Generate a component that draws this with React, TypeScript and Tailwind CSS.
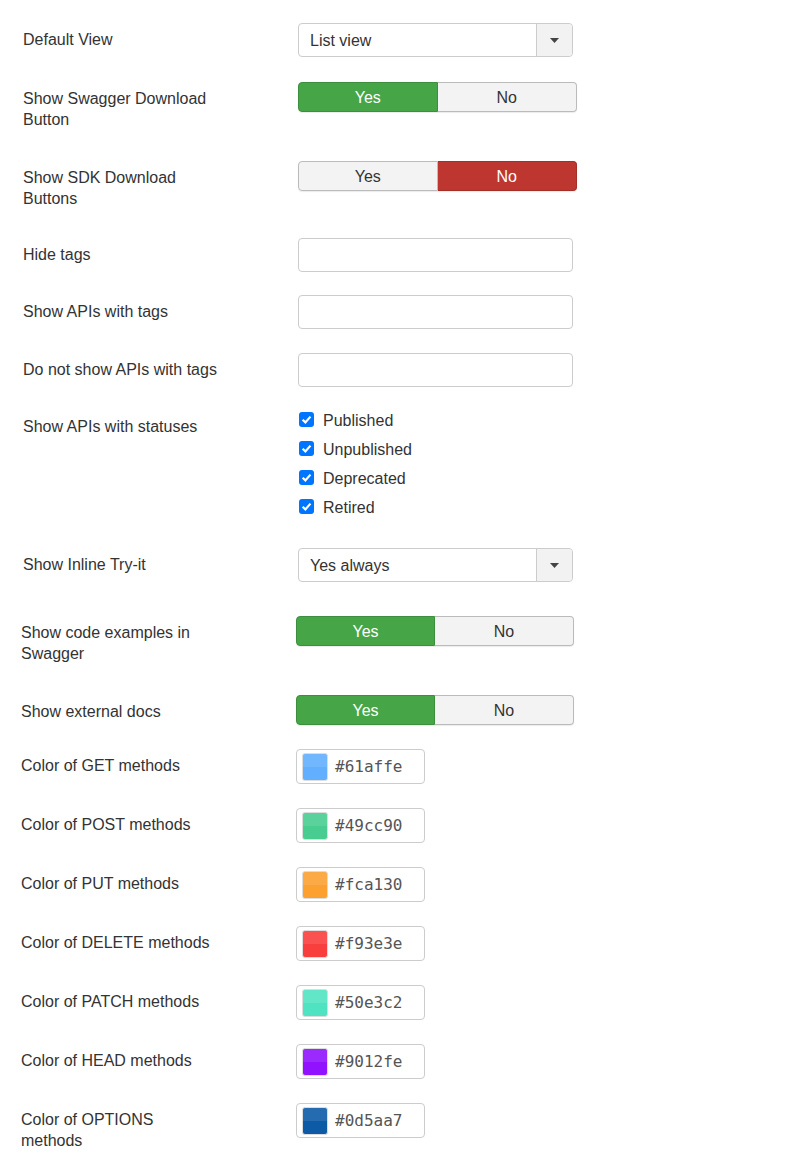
const LABEL = 'w-[220px] shrink-0 pt-[6px] text-[16px] leading-[21px] text-[#333]';

const Caret = () => (
    <span className="w-[36px] shrink-0 flex items-center justify-center border-l border-[#ccc] bg-[#f2f2f2] rounded-r-[4px]">
        <svg width="9" height="5" viewBox="0 0 9 5">
            <path d="M0 0 L9 0 L4.5 5 Z" fill="#444" />
        </svg>
    </span>
);

const Select = ({ value }: { value: string }) => (
    <div className="w-[275px] h-[34px] flex border border-[#ccc] rounded-[4px] bg-white">
        <span className="flex-1 flex items-center pl-[11px] pt-[1px] text-[16px] text-[#333]">{value}</span>
        <Caret />
    </div>
);

const Toggle = ({ on, wide }: { on: boolean; wide?: boolean }) => (
    <div className={`${wide ? 'w-[279px]' : 'w-[278px]'} h-[30px] flex text-[16px] shadow-[0_1px_1px_rgba(0,0,0,0.08)] rounded-[4px]`}>
        <span
            className={
                on
                    ? 'w-1/2 flex items-center justify-center pt-[1px] rounded-l-[4px] bg-[#46a546] border border-[#3c8f3c] text-white'
                    : 'w-1/2 flex items-center justify-center pt-[1px] rounded-l-[4px] bg-[#f3f3f3] border border-[#bbb] text-[#333]'
            }
        >
            Yes
        </span>
        <span
            className={
                on
                    ? 'w-1/2 flex items-center justify-center pt-[1px] rounded-r-[4px] bg-[#f3f3f3] border border-l-0 border-[#bbb] text-[#333]'
                    : 'w-1/2 flex items-center justify-center pt-[1px] rounded-r-[4px] bg-[#bd362f] border border-l-0 border-[#a52e28] text-white'
            }
        >
            No
        </span>
    </div>
);

const TextInput = () => <div className="w-[275px] h-[34px] border border-[#ccc] rounded-[4px] bg-white" />;

const Check = ({ label }: { label: string }) => (
    <div className="h-[29px] flex items-start">
        <span className="mt-[2px] ml-[1px] w-[15px] h-[15px] rounded-[3px] bg-[#0075ff] flex items-center justify-center">
            <svg width="11" height="11" viewBox="0 0 10 10">
                <path d="M1.5 5.2 L4 7.6 L8.6 2.4" stroke="white" strokeWidth="2" fill="none" />
            </svg>
        </span>
        <span className="ml-[9px] text-[16px] leading-[21px] text-[#333]">{label}</span>
    </div>
);

const ColorInput = ({ color }: { color: string }) => (
    <div className="w-[129px] h-[35px] flex items-center border border-[#ccc] rounded-[4px] bg-white pl-[5px]">
        <span
            className="w-[26px] h-[28px] rounded-[3px] border border-[#ddd] overflow-hidden flex flex-col"
            style={{ background: color }}
        >
            <span className="h-1/2 bg-white/10" />
        </span>
        <span className="ml-[7px] text-[16px] text-[#555] font-['DejaVu_Sans_Mono',monospace]">{color}</span>
    </div>
);

const Row = ({ label, mb, children }: { label: React.ReactNode; mb: string; children: React.ReactNode }) => (
    <div className={`flex items-start ${mb}`}>
        <div className={LABEL}>{label}</div>
        <div className="ml-[55px]">{children}</div>
    </div>
);

const COLORS = [
    { name: 'GET', color: '#61affe' },
    { name: 'POST', color: '#49cc90' },
    { name: 'PUT', color: '#fca130' },
    { name: 'DELETE', color: '#f93e3e' },
    { name: 'PATCH', color: '#50e3c2' },
    { name: 'HEAD', color: '#9012fe' },
];

export default function App() {
    return (
        <div className="min-h-screen bg-white font-['Liberation_Sans',Arial,sans-serif] pt-[23px]">
            <div className="pl-[23px]">
                <Row label="Default View" mb="mb-[25px]">
                    <Select value="List view" />
                </Row>
                <Row label={<>Show Swagger Download<br />Button</>} mb="mb-[31px]">
                    <Toggle on wide />
                </Row>
                <Row label={<>Show SDK Download<br />Buttons</>} mb="mb-[29px]">
                    <Toggle on={false} wide />
                </Row>
                <Row label="Hide tags" mb="mb-[23px]">
                    <TextInput />
                </Row>
                <Row label="Show APIs with tags" mb="mb-[24px]">
                    <TextInput />
                </Row>
                <Row label="Do not show APIs with tags" mb="mb-[23px]">
                    <TextInput />
                </Row>
                <Row label="Show APIs with statuses" mb="mb-[22px]">
                    <div>
                        <Check label="Published" />
                        <Check label="Unpublished" />
                        <Check label="Deprecated" />
                        <Check label="Retired" />
                    </div>
                </Row>
                <Row label="Show Inline Try-it" mb="mb-[34px]">
                    <Select value="Yes always" />
                </Row>
            </div>

            <div className="pl-[21px] pb-[14px]">
                <Row label={<>Show code examples in<br />Swagger</>} mb="mb-[31px]">
                    <Toggle on />
                </Row>
                <Row label="Show external docs" mb="mb-[24px]">
                    <Toggle on />
                </Row>
                {COLORS.map((c) => (
                    <Row key={c.name} label={`Color of ${c.name} methods`} mb="mb-[24px]">
                        <ColorInput color={c.color} />
                    </Row>
                ))}
                <Row label={<>Color of OPTIONS<br />methods</>} mb="mb-0">
                    <ColorInput color="#0d5aa7" />
                </Row>
            </div>
        </div>
    );
}
